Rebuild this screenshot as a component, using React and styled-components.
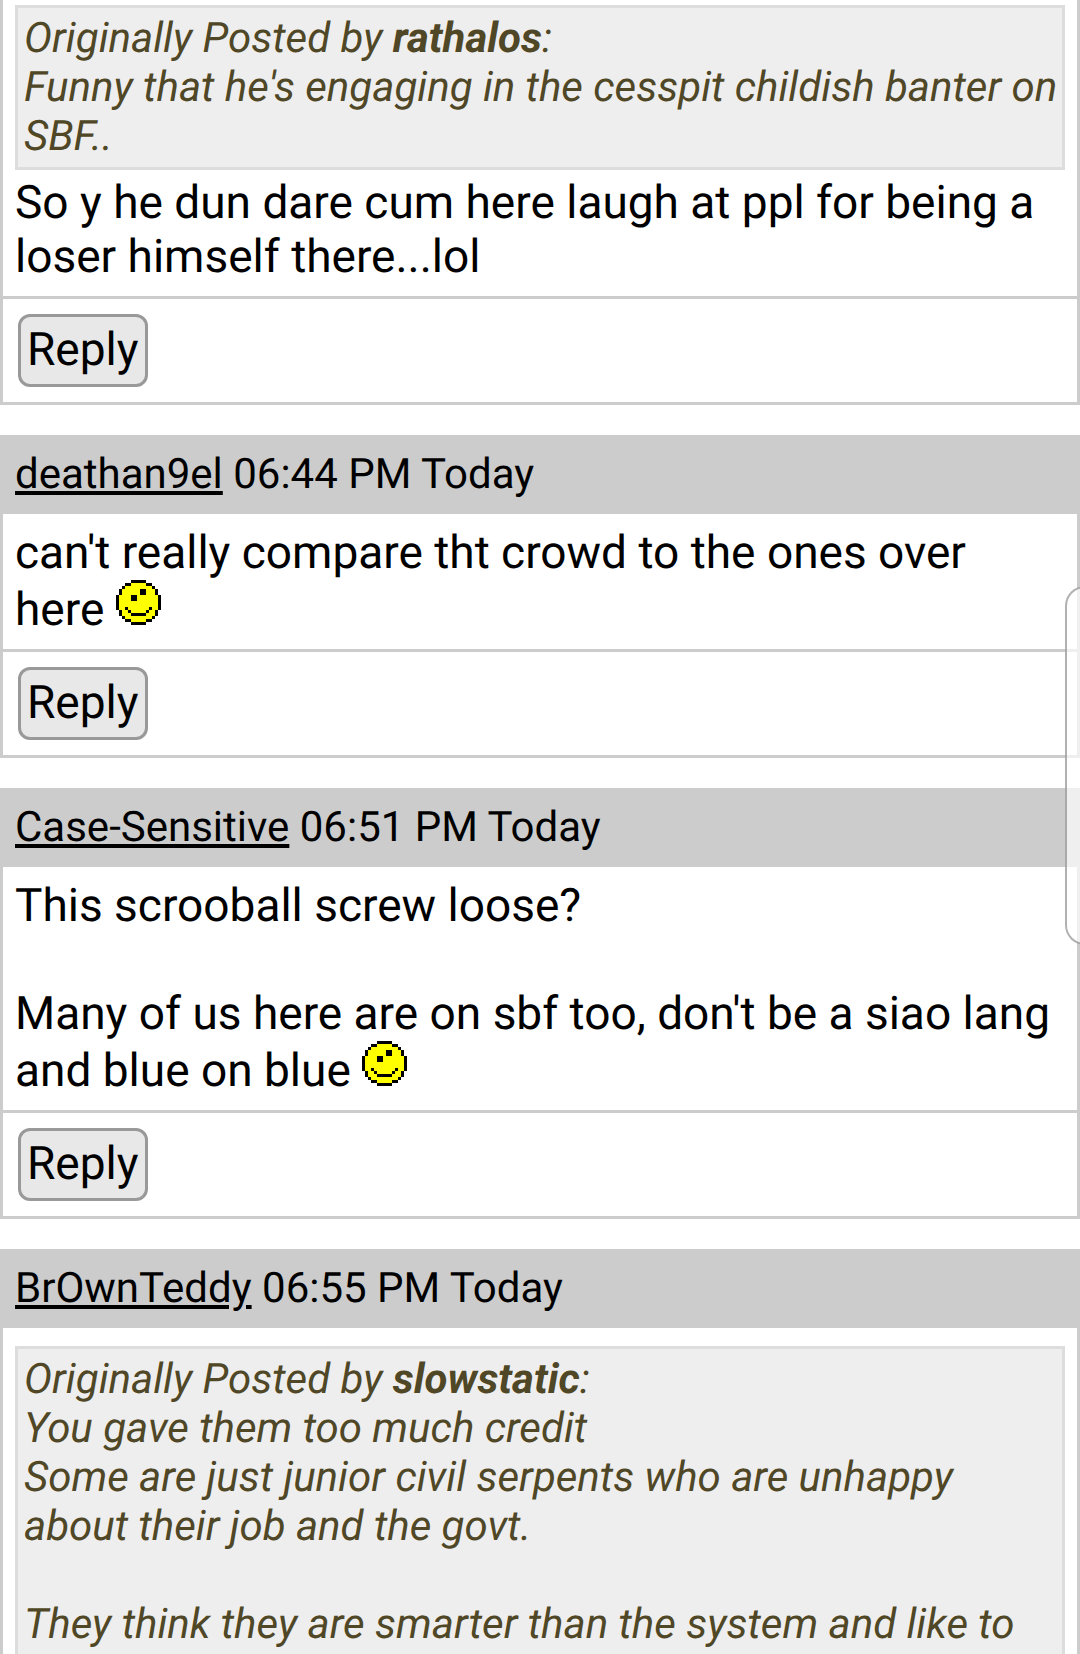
import React from "react";
import styled, { createGlobalStyle } from "styled-components";

const GlobalStyle = createGlobalStyle`
  *, *::before, *::after { box-sizing: border-box; }
  html, body { margin: 0; background: #fff; }
  body {
    font-family: Roboto, "Liberation Sans", sans-serif;
    text-rendering: geometricPrecision;
    color: #000;
    overflow-x: hidden;
  }
`;

const Thread = styled.main`
  display: flex;
  flex-direction: column;
  gap: 30px;
  min-height: 100vh;
`;

const Post = styled.article`
  display: flex;
  flex-direction: column;
  flex: ${(p) => (p.$open ? "1 0 auto" : "none")};
  border: 3px solid #ccc;
  border-width: ${(p) => (p.$open ? "0 3px 0" : "0 3px 3px")};
`;

const PostHeader = styled.header`
  padding: 15px 12px;
  background: #ccc;
  font-size: 42px;
  line-height: 49px;
`;

const Author = styled.a`
  color: inherit;
  text-decoration: underline;
  text-decoration-thickness: 4px;
  text-underline-offset: 3px;
`;

const PostBody = styled.div`
  display: flex;
  flex-direction: column;
  flex: 1 0 auto;
  gap: 6px;
  padding: ${(p) => (p.$continued ? "5px 12px 12px" : p.$quoted ? "18px 12px 0" : "12px")};
`;

const Message = styled.p`
  margin: 0;
  font-size: 46px;
  line-height: 54px;
  white-space: pre-line;
`;

const Quote = styled.blockquote`
  flex: 1 0 auto;
  margin: 0;
  padding: 6px 0 6px 6px;
  border: 3px solid #ddd;
  border-bottom-width: ${(p) => (p.$open ? "0" : "3px")};
  background: #eee;
  color: #4f4726;
  font-size: 42px;
  font-style: italic;
  line-height: 49px;
  white-space: pre-line;
`;

const PostFooter = styled.footer`
  display: flex;
  padding: 15px;
  border-top: 3px solid #ccc;
`;

const ReplyButton = styled.button`
  padding: 6px;
  border: 3px solid #999;
  border-radius: 12px;
  background: #e8e8e8;
  color: #000;
  font-family: inherit;
  font-size: 46px;
  line-height: 55px;
  text-rendering: inherit;
`;

const Face = styled.svg`
  width: 45px;
  height: 45px;
  vertical-align: baseline;
`;

const ScrollHandle = styled.div`
  position: fixed;
  top: 586px;
  right: -5px;
  width: 20px;
  height: 359px;
  border: 2px solid rgba(100, 100, 100, 0.5);
  border-right: 0;
  border-radius: 20px 0 0 20px;
  background: rgba(255, 255, 255, 0.69);
`;

const FACE_ROWS = [
  ".....#####.....",
  "...##yyyyy##...",
  "..#yyyyyyyyy#..",
  ".#yyyyyy##yyy#.",
  ".#yyyyyy##yyy#.",
  "#yyyy##yyyyyyy#",
  "#yyyy##yyyyyyy#",
  "#yyyyyyyyyyyyy#",
  "#yyyyyyyyyyyyy#",
  "#yy#yyyyyyy#yy#",
  ".#yy#yyyyy#yy#.",
  ".#yyy#####yyy#.",
  "..#yyyyyyyyy#..",
  "...##yyyyy##...",
  ".....#####.....",
];

function Smiley() {
  return (
    <Face viewBox="0 0 15 15" role="img" aria-label="smile" shapeRendering="crispEdges">
      {FACE_ROWS.flatMap((row, y) =>
        [...row].map((c, x) =>
          c === "." ? null : (
            <rect key={`${x}-${y}`} x={x} y={y} width="1" height="1" fill={c === "#" ? "#000" : "#ff0"} />
          )
        )
      )}
    </Face>
  );
}

const posts = [
  {
    continued: true,
    quote: { author: "rathalos", text: "Funny that he's engaging in the cesspit childish banter on SBF.." },
    text: "So y he dun dare cum here laugh at ppl for being a loser himself there...lol",
  },
  {
    author: "deathan9el",
    time: "06:44 PM Today",
    text: "can't really compare tht crowd to the ones over here ",
    smile: true,
  },
  {
    author: "Case-Sensitive",
    time: "06:51 PM Today",
    text: "This scrooball screw loose?\n\nMany of us here are on sbf too, don't be a siao lang and blue on blue ",
    smile: true,
  },
  {
    author: "BrOwnTeddy",
    time: "06:55 PM Today",
    open: true,
    quote: {
      author: "slowstatic",
      text: "You gave them too much credit\nSome are just junior civil serpents who are unhappy about their job and the govt.\n\nThey think they are smarter than the system and like to",
    },
  },
];

export default function App() {
  return (
    <>
      <GlobalStyle />
      <Thread>
        {posts.map((p, i) => (
          <Post key={i} $open={p.open}>
            {p.author && (
              <PostHeader>
                <Author href="#profile">{p.author}</Author> {p.time}
              </PostHeader>
            )}
            <PostBody $continued={p.continued} $quoted={!!p.quote}>
              {p.quote && (
                <Quote $open={p.open}>
                  Originally Posted by <b>{p.quote.author}</b>:{"\n"}
                  {p.quote.text}
                </Quote>
              )}
              {p.text && (
                <Message>
                  {p.text}
                  {p.smile && <Smiley />}
                </Message>
              )}
            </PostBody>
            {!p.open && (
              <PostFooter>
                <ReplyButton type="button">Reply</ReplyButton>
              </PostFooter>
            )}
          </Post>
        ))}
      </Thread>
      <ScrollHandle aria-hidden="true" />
    </>
  );
}
